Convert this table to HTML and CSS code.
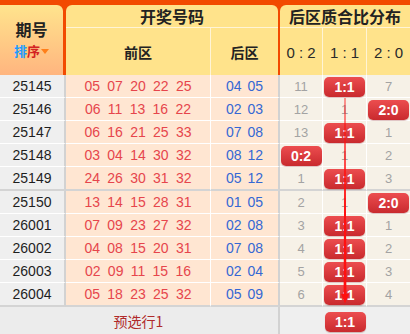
FILE: index.html
```html
<!DOCTYPE html>
<html lang="zh-CN">
<head>
<meta charset="utf-8">
<title>后区质合比分布</title>
<link rel="stylesheet" href="styles.css">
</head>
<body>
<div class="chart">
  <div class="head">
    <div class="h-qh">
      <div class="h-qh-title">期号</div>
      <div class="h-sort"><span class="s-blue">排</span><span class="s-red">序</span><span class="tri"></span></div>
    </div>
    <div class="h-kj">
      <div class="h-title">开奖号码</div>
      <div class="h-sub">
        <div class="hs-qian">前区</div>
        <div class="hs-hou">后区</div>
      </div>
    </div>
    <div class="h-fb">
      <div class="h-title">后区质合比分布</div>
      <div class="h-sub">
        <div class="hs-ratio">0 : 2</div>
        <div class="hs-ratio">1 : 1</div>
        <div class="hs-ratio last">2 : 0</div>
      </div>
    </div>
  </div>

  <div class="body">
    <div class="row">
      <div class="c-qh">25145</div>
      <div class="c-qian"><span>05</span><span>07</span><span>20</span><span>22</span><span>25</span></div>
      <div class="c-hou"><span>04</span><span>05</span></div>
      <div class="c-fb">11</div>
      <div class="c-fb"><span class="badge">1:1</span></div>
      <div class="c-fb last">7</div>
    </div>
    <div class="row">
      <div class="c-qh">25146</div>
      <div class="c-qian"><span>06</span><span>11</span><span>13</span><span>16</span><span>22</span></div>
      <div class="c-hou"><span>02</span><span>03</span></div>
      <div class="c-fb">12</div>
      <div class="c-fb">1</div>
      <div class="c-fb last"><span class="badge">2:0</span></div>
    </div>
    <div class="row">
      <div class="c-qh">25147</div>
      <div class="c-qian"><span>06</span><span>16</span><span>21</span><span>25</span><span>33</span></div>
      <div class="c-hou"><span>07</span><span>08</span></div>
      <div class="c-fb">13</div>
      <div class="c-fb"><span class="badge">1:1</span></div>
      <div class="c-fb last">1</div>
    </div>
    <div class="row">
      <div class="c-qh">25148</div>
      <div class="c-qian"><span>03</span><span>04</span><span>14</span><span>30</span><span>32</span></div>
      <div class="c-hou"><span>08</span><span>12</span></div>
      <div class="c-fb"><span class="badge">0:2</span></div>
      <div class="c-fb">1</div>
      <div class="c-fb last">2</div>
    </div>
    <div class="row sep">
      <div class="c-qh">25149</div>
      <div class="c-qian"><span>24</span><span>26</span><span>30</span><span>31</span><span>32</span></div>
      <div class="c-hou"><span>05</span><span>12</span></div>
      <div class="c-fb">1</div>
      <div class="c-fb"><span class="badge">1:1</span></div>
      <div class="c-fb last">3</div>
    </div>
    <div class="row">
      <div class="c-qh">25150</div>
      <div class="c-qian"><span>13</span><span>14</span><span>15</span><span>28</span><span>31</span></div>
      <div class="c-hou"><span>01</span><span>05</span></div>
      <div class="c-fb">2</div>
      <div class="c-fb">1</div>
      <div class="c-fb last"><span class="badge">2:0</span></div>
    </div>
    <div class="row">
      <div class="c-qh">26001</div>
      <div class="c-qian"><span>07</span><span>09</span><span>23</span><span>27</span><span>32</span></div>
      <div class="c-hou"><span>02</span><span>08</span></div>
      <div class="c-fb">3</div>
      <div class="c-fb"><span class="badge">1:1</span></div>
      <div class="c-fb last">1</div>
    </div>
    <div class="row">
      <div class="c-qh">26002</div>
      <div class="c-qian"><span>04</span><span>08</span><span>15</span><span>20</span><span>31</span></div>
      <div class="c-hou"><span>07</span><span>08</span></div>
      <div class="c-fb">4</div>
      <div class="c-fb"><span class="badge">1:1</span></div>
      <div class="c-fb last">2</div>
    </div>
    <div class="row">
      <div class="c-qh">26003</div>
      <div class="c-qian"><span>02</span><span>09</span><span>11</span><span>15</span><span>16</span></div>
      <div class="c-hou"><span>02</span><span>04</span></div>
      <div class="c-fb">5</div>
      <div class="c-fb"><span class="badge">1:1</span></div>
      <div class="c-fb last">3</div>
    </div>
    <div class="row sep">
      <div class="c-qh">26004</div>
      <div class="c-qian"><span>05</span><span>18</span><span>23</span><span>25</span><span>32</span></div>
      <div class="c-hou"><span>05</span><span>09</span></div>
      <div class="c-fb">6</div>
      <div class="c-fb"><span class="badge">1:1</span></div>
      <div class="c-fb last">4</div>
    </div>
    <div class="foot">
      <div class="f-qh"></div>
      <div class="f-qian">预选行1</div>
      <div class="f-hou"></div>
      <div class="f-fb"></div>
      <div class="f-fb"><span class="badge">1:1</span></div>
      <div class="f-fb"></div>
    </div>

    <svg class="trend" width="410" height="260" viewBox="0 0 410 260" aria-hidden="true">
      <polygon points="344.6,23 345.4,23 346.4,219 349,219 345,228.5 341,219 343.6,219" fill="#ff1010"/>
    </svg>
  </div>
</div>
</body>
</html>
```
FILE: styles.css
```css
* {
  box-sizing: border-box;
  margin: 0;
  padding: 0;
}

body {
  margin: 0;
  width: 410px;
  height: 334px;
  overflow: hidden;
  background: #ffffff;
  font-family: "Liberation Sans", "Noto Sans CJK SC", sans-serif;
  color: #222;
}

.chart {
  width: 410px;
}

/* ---------- header ---------- */
.head {
  display: flex;
  height: 75px;
  padding-top: 5px;
  background: #f24a00;
}

.h-qh {
  width: 63px;
  margin-right: 3px;
  border-radius: 0 6px 0 0;
  background: linear-gradient(#ffe48d, #ffb57f);
  display: flex;
  flex-direction: column;
  align-items: center;
  justify-content: center;
  padding-bottom: 1px;
  font-family: "Noto Sans CJK SC", sans-serif;
}

.h-qh-title {
  font-size: 16px;
  font-weight: bold;
  line-height: 19px;
  color: #222;
}

.h-sort {
  display: flex;
  align-items: center;
  font-size: 13px;
  font-weight: bold;
  line-height: 16px;
  margin-top: 4px;
}

.s-blue { color: #1d9bff; }
.s-red { color: #d42222; }

.tri {
  width: 0;
  height: 0;
  margin-left: 1px;
  border-left: 4px solid transparent;
  border-right: 4px solid transparent;
  border-top: 5px solid #ff7f1a;
}

.h-kj {
  width: 212px;
  margin-right: 2px;
  border-radius: 6px 6px 0 0;
  background: #ffe38b;
  display: flex;
  flex-direction: column;
}

.h-fb {
  width: 130px;
  border-radius: 6px 0 0 0;
  background: #ffe38b;
  display: flex;
  flex-direction: column;
}

.h-title {
  height: 23px;
  border-bottom: 1px solid #fff4d6;
  display: flex;
  align-items: center;
  justify-content: center;
  font-family: "Noto Sans CJK SC", sans-serif;
  font-size: 16px;
  font-weight: bold;
  color: #222;
}

.h-sub {
  flex: 1;
  display: flex;
}

.h-sub > div {
  display: flex;
  align-items: center;
  justify-content: center;
}

.hs-qian,
.hs-hou {
  font-family: "Noto Sans CJK SC", sans-serif;
  font-size: 14px;
  font-weight: bold;
  color: #222;
}

.hs-qian {
  width: 145px;
  border-right: 1px solid #fff4d6;
}

.hs-hou {
  width: 67px;
}

.hs-ratio {
  width: 43px;
  border-right: 1px solid #fff4d6;
  font-size: 15px;
  color: #2a2a2a;
  padding-top: 1px;
}

.hs-ratio:nth-child(2) {
  width: 44px;
}

.hs-ratio.last {
  border-right: none;
}

/* ---------- body ---------- */
.body {
  position: relative;
}

.row,
.foot {
  display: grid;
  grid-template-columns: 66px 145px 69px 43px 44px 43px;
}

.row {
  height: 23px;
}

.row > div {
  display: flex;
  align-items: center;
  justify-content: center;
  border-bottom: 1px solid #ffffff;
}

.row.sep {
  height: 24px;
}

.row.sep > div {
  border-bottom: 2px solid #d4d4d4;
}

.c-qh {
  background: #efefef;
  border-right: 2px solid #d2d2d2;
  font-size: 14px;
  color: #1e1e1e;
}

.c-qian {
  background: #ffe6d2;
  border-right: 1px solid #ffffff;
  gap: 7.3px;
  font-size: 14px;
  color: #e6454c;
}

.c-hou {
  background: #ffe6d2;
  border-right: 2px solid #d2d2d2;
  gap: 6px;
  font-size: 14px;
  color: #3568d4;
}

.c-fb {
  background: #f6f1e7;
  border-right: 1px solid #ffffff;
  font-size: 13px;
  color: #a3a3a3;
}

.c-fb.last {
  border-right: none;
}

.badge {
  align-self: flex-start;
  margin-top: 2px;
  width: 41px;
  height: 20px;
  border-radius: 5px;
  background: linear-gradient(#ec4d4f, #c92a2e);
  box-shadow: 0 1px 1px rgba(120, 0, 0, 0.25);
  color: #ffffff;
  font-size: 14px;
  font-weight: bold;
  line-height: 20px;
  text-align: center;
}

.foot {
  height: 27px;
  background: #ececec;
}

.foot > div {
  display: flex;
  align-items: center;
  justify-content: center;
}

.f-qian {
  font-family: "Noto Sans CJK SC", sans-serif;
  font-size: 14px;
  color: #b02a2a;
}

.f-hou {
  border-right: 2px solid #d2d2d2;
}

.f-fb {
  background: #efefef;
}

.f-fb .badge {
  margin-top: 5px;
}

.trend {
  position: absolute;
  left: 0;
  top: 0;
  pointer-events: none;
}
```
